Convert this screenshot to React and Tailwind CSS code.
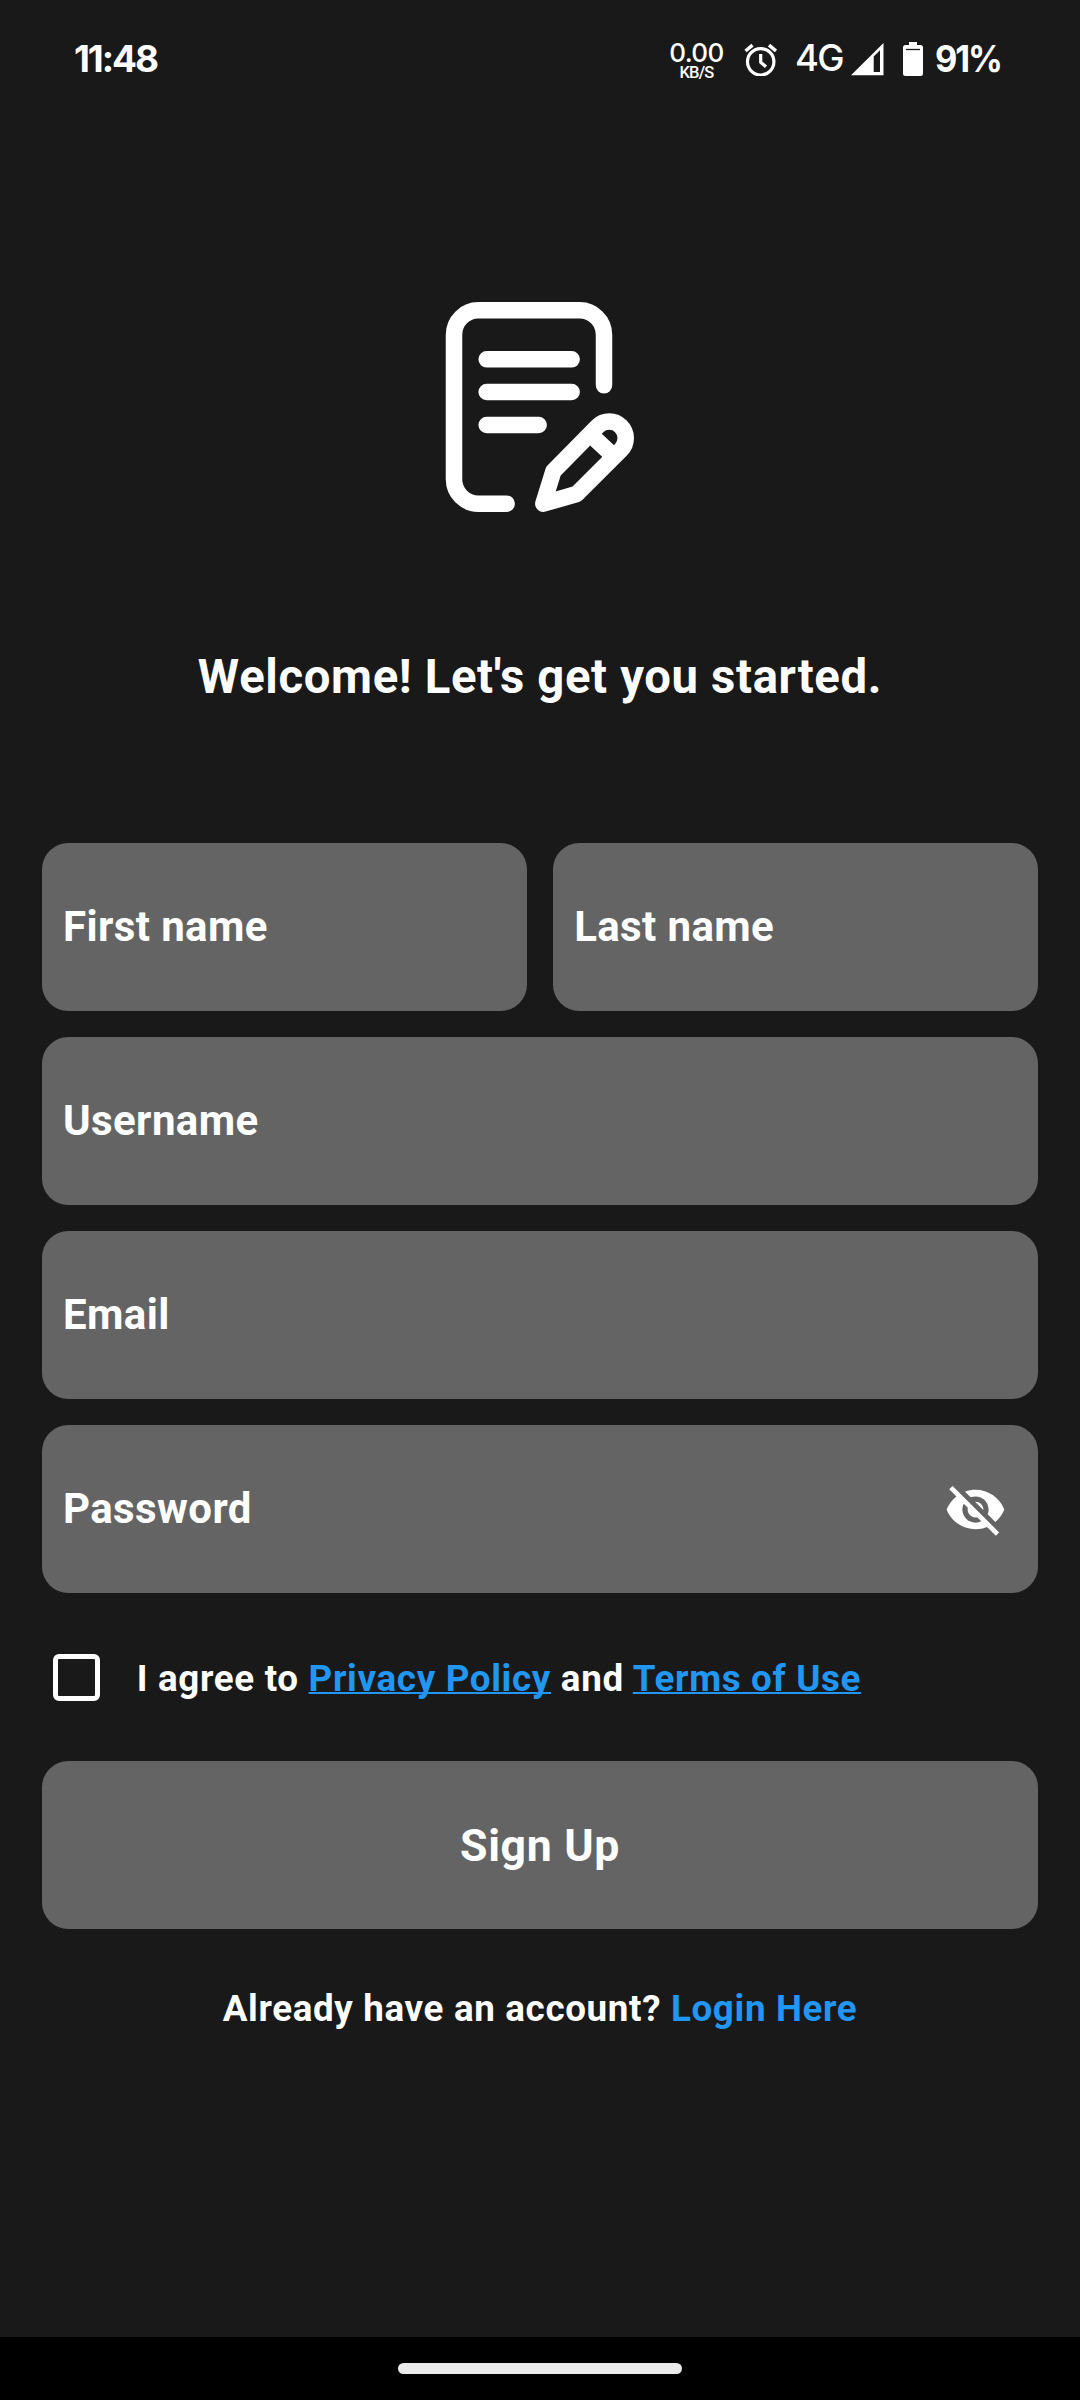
import { MdVisibilityOff } from "react-icons/md";

function StatusBar() {
  return (
    <div className="flex h-[118px] items-center whitespace-nowrap pl-[74px] font-[Inter,sans-serif]">
      <span className="w-[595px] pb-[2px] text-[37px] font-bold leading-none tracking-[-2.1px]">11:48</span>
      <div className="flex w-[55px] flex-col items-center pt-[2px]">
        <span className="text-[26px] font-medium leading-[24px] tracking-[-0.6px]">0.00</span>
        <span className="font-[Roboto,sans-serif] text-[16.5px] font-medium leading-[15px] tracking-[-0.8px]">KB/S</span>
      </div>
      <svg className="ml-[20px] size-[33px]" viewBox="0 0 33 33" fill="none" stroke="white" strokeWidth="3.2">
        <circle cx="16.700" cy="18.800" r="13.200" />
        <path d="M1.500 8L8.500 2.200M25 2.200L32 8" strokeWidth="3.500" />
        <path d="M16.700 11V19.300L22 23.800" />
      </svg>
      <span className="ml-[18px] w-[50px] pb-[1px] text-[36.5px] font-medium leading-none tracking-[-1.6px]">4G</span>
      <svg className="ml-[6px] size-[33px]" viewBox="0 0 33 33">
        <path d="M0 32.300L32.500 0V32.300ZM22.700 13.500V29H29V7.300Z" fill="white" fillRule="evenodd" />
      </svg>
      <svg className="ml-[19px] h-[34px] w-[20px]" viewBox="0 0 20 34">
        <path d="M6 0H14V3H17.500Q20 3 20 5.500V31.500Q20 34 17.500 34H2.500Q0 34 0 31.500V5.500Q0 3 2.500 3H6Z" fill="white" />
        <path d="M3 7.500H17" stroke="#191919" strokeWidth="1.300" />
      </svg>
      <span className="ml-[12px] origin-left scale-x-[0.93] pb-[2px] text-[37px] font-bold leading-none tracking-[-2.2px]">91%</span>
    </div>
  );
}

function NoteIcon() {
  return (
    <svg className="h-[250px] w-[240px]" viewBox="0 0 720 750" fill="none" stroke="white" strokeWidth="49.500" strokeLinecap="round" strokeLinejoin="round">
      <path d="M260 671H175a73 73 0 0 1-73-73V164a73 73 0 0 1 73-73H479a73 73 0 0 1 73 73V316" />
      <path d="M200 238H455M200 336H455M200 435H356" />
      <path d="M370 671L400 574L533 439A49.500 49.500 0 0 1 603 509L470 642Z" />
      <path d="M529 480L565 514" />
    </svg>
  );
}

function Field({ label, children }) {
  return (
    <div className="flex h-[168px] min-w-0 flex-1 items-center justify-between rounded-[26.25px] bg-[#646464] pl-[21px] pr-[31.5px]">
      <span className="whitespace-nowrap text-[42px] font-bold leading-none tracking-[0.394px]">{label}</span>
      {children}
    </div>
  );
}

function PolicyLink({ children }) {
  return (
    <a className="text-[#2196f3] underline decoration-[2px] underline-offset-[1px] [text-decoration-skip-ink:none]">
      {children}
    </a>
  );
}

export default function App() {
  return (
    <div className="flex h-[2400px] w-[1080px] flex-col overflow-hidden bg-[#191919] font-[Roboto,sans-serif] text-white">
      <StatusBar />
      <div className="mt-[162px] flex justify-center">
        <NoteIcon />
      </div>
      <h1 className="mt-[119px] self-center whitespace-nowrap text-[47.25px] font-bold leading-[56px] tracking-[0.656px]">
        Welcome! Let's get you started.
      </h1>
      <div className="mt-[137.6px] flex flex-col gap-[26.25px] px-[42px]">
        <div className="flex gap-[26.25px]">
          <Field label="First name" />
          <Field label="Last name" />
        </div>
        <div className="flex">
          <Field label="Username" />
        </div>
        <div className="flex">
          <Field label="Email" />
        </div>
        <div className="flex">
          <Field label="Password">
            <MdVisibilityOff className="size-[63px]" />
          </Field>
        </div>
      </div>
      <div className="mt-[60.6px] flex h-[47.25px] items-center pl-[52.5px]">
        <span className="size-[47.25px] rounded-[6px] border-[5.25px] border-white" />
        <p className="ml-[37px] whitespace-nowrap pt-[4px] text-[36.75px] font-bold leading-none tracking-[0.68px]">
          I agree to <PolicyLink>Privacy Policy</PolicyLink> and <PolicyLink>Terms of Use</PolicyLink>
        </p>
      </div>
      <button className="mx-[42px] mt-[60.1px] flex h-[168px] items-center justify-center rounded-[26.25px] bg-[#646464]">
        <span className="pt-[3px] text-[44.625px] font-bold leading-none tracking-[0.656px]">Sign Up</span>
      </button>
      <p className="mt-[57.8px] self-center whitespace-nowrap text-[36.75px] font-bold leading-[44px] tracking-[0.656px]">
        Already have an account? <a className="text-[#2196f3]">Login Here</a>
      </p>
      <div className="mt-auto flex h-[63px] items-center justify-center bg-black">
        <div className="h-[11px] w-[284px] rounded-full bg-[#ebebeb]" />
      </div>
    </div>
  );
}
